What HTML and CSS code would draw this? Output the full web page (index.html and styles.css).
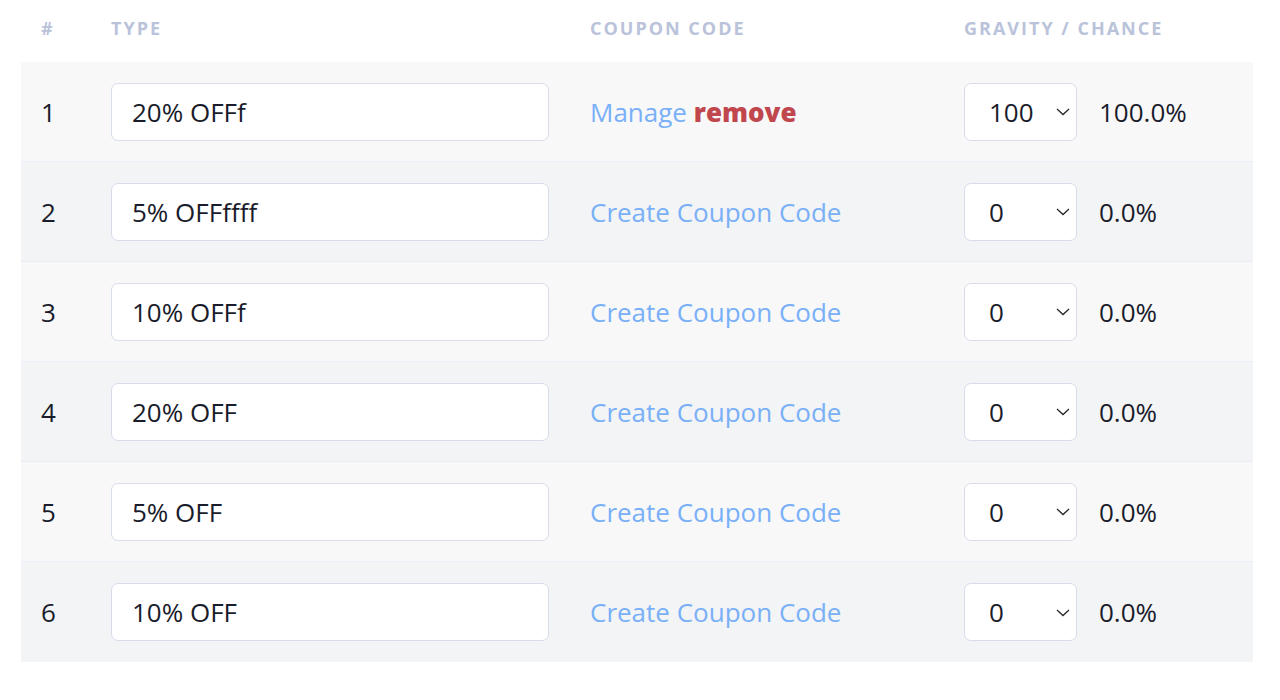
FILE: index.html
```html
<!DOCTYPE html>
<html>
<head>
<meta charset="utf-8">
<link rel="stylesheet" href="styles.css">
</head>
<body>
<div class="table">
  <div class="row head">
    <div class="cell num">#</div>
    <div class="cell">Type</div>
    <div class="cell">Coupon Code</div>
    <div class="cell">Gravity / Chance</div>
  </div>

  <div class="row odd">
    <div class="cell num">1</div>
    <div class="cell"><input class="field" type="text" value="20% OFFf"></div>
    <div class="cell"><a class="link">Manage</a>&nbsp;<a class="remove">remove</a></div>
    <div class="cell gravity">
      <div class="select"><span>100</span><svg width="14" height="8" viewBox="0 0 14 8"><path d="M1 1 L7 6.5 L13 1" fill="none" stroke="#2a2a2a" stroke-width="1.3"/></svg></div>
      <span class="pct">100.0%</span>
    </div>
  </div>

  <div class="row even">
    <div class="cell num">2</div>
    <div class="cell"><input class="field" type="text" value="5% OFFffff"></div>
    <div class="cell"><a class="link">Create Coupon Code</a></div>
    <div class="cell gravity">
      <div class="select"><span>0</span><svg width="14" height="8" viewBox="0 0 14 8"><path d="M1 1 L7 6.5 L13 1" fill="none" stroke="#2a2a2a" stroke-width="1.3"/></svg></div>
      <span class="pct">0.0%</span>
    </div>
  </div>

  <div class="row odd">
    <div class="cell num">3</div>
    <div class="cell"><input class="field" type="text" value="10% OFFf"></div>
    <div class="cell"><a class="link">Create Coupon Code</a></div>
    <div class="cell gravity">
      <div class="select"><span>0</span><svg width="14" height="8" viewBox="0 0 14 8"><path d="M1 1 L7 6.5 L13 1" fill="none" stroke="#2a2a2a" stroke-width="1.3"/></svg></div>
      <span class="pct">0.0%</span>
    </div>
  </div>

  <div class="row even">
    <div class="cell num">4</div>
    <div class="cell"><input class="field" type="text" value="20% OFF"></div>
    <div class="cell"><a class="link">Create Coupon Code</a></div>
    <div class="cell gravity">
      <div class="select"><span>0</span><svg width="14" height="8" viewBox="0 0 14 8"><path d="M1 1 L7 6.5 L13 1" fill="none" stroke="#2a2a2a" stroke-width="1.3"/></svg></div>
      <span class="pct">0.0%</span>
    </div>
  </div>

  <div class="row odd">
    <div class="cell num">5</div>
    <div class="cell"><input class="field" type="text" value="5% OFF"></div>
    <div class="cell"><a class="link">Create Coupon Code</a></div>
    <div class="cell gravity">
      <div class="select"><span>0</span><svg width="14" height="8" viewBox="0 0 14 8"><path d="M1 1 L7 6.5 L13 1" fill="none" stroke="#2a2a2a" stroke-width="1.3"/></svg></div>
      <span class="pct">0.0%</span>
    </div>
  </div>

  <div class="row even last">
    <div class="cell num">6</div>
    <div class="cell"><input class="field" type="text" value="10% OFF"></div>
    <div class="cell"><a class="link">Create Coupon Code</a></div>
    <div class="cell gravity">
      <div class="select"><span>0</span><svg width="14" height="8" viewBox="0 0 14 8"><path d="M1 1 L7 6.5 L13 1" fill="none" stroke="#2a2a2a" stroke-width="1.3"/></svg></div>
      <span class="pct">0.0%</span>
    </div>
  </div>
</div>
</body>
</html>
```
FILE: styles.css
```css
* { box-sizing: border-box; }
html, body {
  margin: 0;
  background: #ffffff;
}
body {
  font-family: "Open Sans", "Noto Sans", sans-serif;
  color: #1a1c2b;
}
.table {
  margin-left: 21px;
  width: 1232px;
}
.row {
  display: grid;
  grid-template-columns: 90px 479px 374px 1fr;
  align-items: center;
  height: 100px;
  border-bottom: 1px solid #eaedf7;
  font-size: 26px;
}
.row.head {
  height: 62px;
  border-bottom: none;
  font-size: 18px;
  font-weight: 700;
  letter-spacing: 2px;
  text-transform: uppercase;
  color: #bac3da;
  padding-bottom: 6px;
}
.row.odd { background: #f8f8f9; }
.row.even { background: #f3f4f5; }
.row.last { border-bottom: none; }
.cell.num { padding-left: 20px; }
.field {
  display: block;
  width: 438px;
  height: 58px;
  border: 1px solid #d6dcec;
  border-radius: 7px;
  background: #fff;
  padding: 0 20px;
  font-family: inherit;
  font-size: 26px;
  color: #1a1c2b;
  outline: none;
}
.link {
  color: #79b0f8;
  text-decoration: none;
}
.remove {
  color: #c0474e;
  font-weight: 800;
}
.gravity {
  display: flex;
  align-items: center;
  gap: 22px;
}
.select {
  width: 113px;
  height: 58px;
  border: 1px solid #d6dcec;
  border-radius: 7px;
  background: #fff;
  display: flex;
  align-items: center;
  justify-content: space-between;
  padding: 0 6px 0 24px;
}
.select svg { display: block; margin-top: 1px; }
```
